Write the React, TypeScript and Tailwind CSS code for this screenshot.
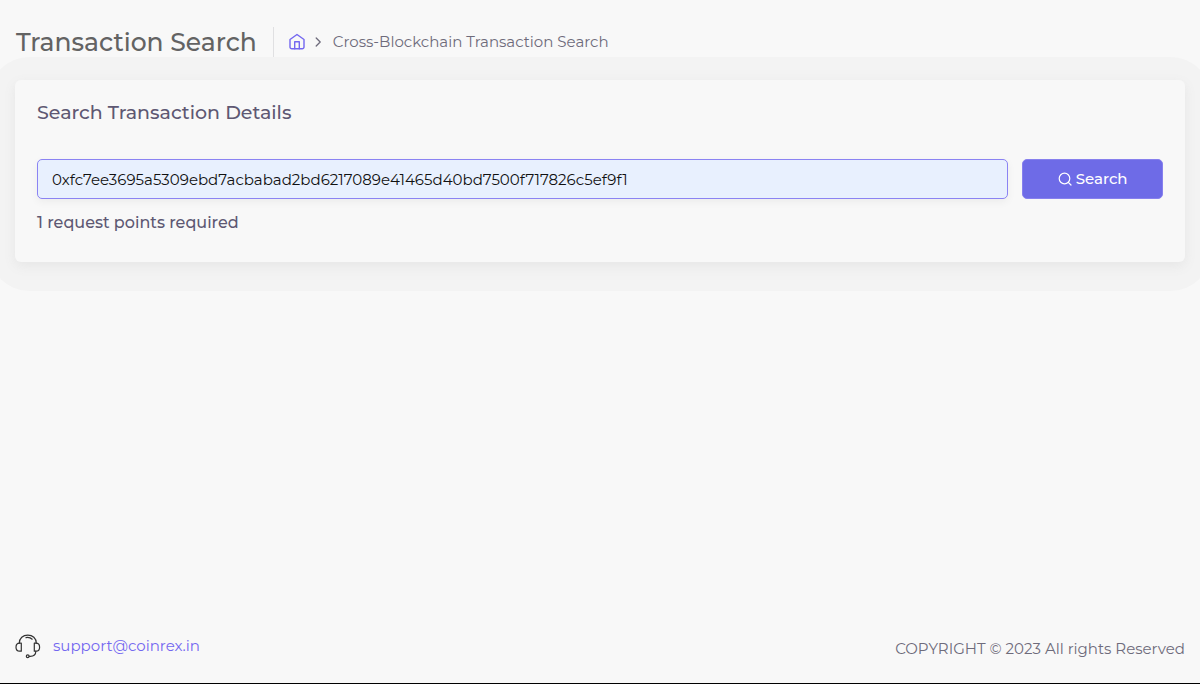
import { useState } from "react";

function HomeIcon() {
  return (
    <svg viewBox="0 0 18 18" className="h-[18px] w-[18px]" fill="none" stroke="currentColor" strokeWidth="1.4" strokeLinejoin="round" strokeLinecap="round" aria-hidden="true">
      <path d="M2 6.500 9 1.500l7 5v7.500a1.800 1.800 0 0 1-1.800 1.800H3.800A1.800 1.800 0 0 1 2 14z" />
      <path d="M6.700 15.800V8.800h4.600v7" />
    </svg>
  );
}

function ChevronIcon() {
  return (
    <svg viewBox="0 0 14 14" className="h-3.5 w-3.5" fill="none" stroke="currentColor" strokeWidth="1.3" strokeLinejoin="round" strokeLinecap="round" aria-hidden="true">
      <path d="m5.200 3 4 4-4 4" />
    </svg>
  );
}

function SearchIcon() {
  return (
    <svg viewBox="0 0 14 14" className="h-3.5 w-3.5" fill="none" stroke="currentColor" strokeWidth="1.2" strokeLinecap="round" aria-hidden="true">
      <circle cx="6.500" cy="6.500" r="5.300" />
      <path d="m10.300 10.300 2.700 2.700" />
    </svg>
  );
}

function HeadsetIcon() {
  return (
    <svg viewBox="0 0 26 26" className="h-[26px] w-[26px]" fill="none" stroke="currentColor" strokeWidth="1.2" strokeLinejoin="round" strokeLinecap="round" aria-hidden="true">
      <path d="M4.300 10.200C4.300 5.300 8 2.100 12.800 2.100s8.500 3.200 8.500 8.100" />
      <path d="M11 4.600c2.600-.4 4.700.2 6.200 1.600" />
      <path d="M6.300 10.200v8H4.600c-2.100 0-3.600-1.600-3.600-4s1.500-4 3.600-4z" />
      <path d="M19.300 10.200v8H21c2.100 0 3.600-1.600 3.600-4s-1.500-4-3.600-4z" />
      <path d="M20.800 18.300c0 3-2.200 5-5.600 5h-1" />
      <circle cx="12.700" cy="23.200" r="1.400" />
    </svg>
  );
}

export default function App() {
  const [hash, setHash] = useState("0xfc7ee3695a5309ebd7acbabad2bd6217089e41465d40bd7500f717826c5ef9f1");

  return (
    <div className="flex min-h-screen flex-col overflow-x-hidden border-b border-black bg-[#f8f8f8] font-['Montserrat','Inter',sans-serif] text-[#6e6b7b]">
      <header className="flex h-20 items-center px-4 pt-1">
        <h1 className="border-r border-[#e0e0e2] pr-4 text-[25px] leading-[30px] font-medium text-[#636363]">Transaction Search</h1>
        <nav aria-label="Breadcrumb" className="pl-3.5">
          <ol className="flex items-center text-[15px] leading-5">
            <li>
              <a href="#home" aria-label="Home" className="block text-[#7367f0]"><HomeIcon /></a>
            </li>
            <li aria-hidden="true" className="mx-1 pl-px"><ChevronIcon /></li>
            <li aria-current="page" className="pl-1">Cross-Blockchain Transaction Search</li>
          </ol>
        </nav>
      </header>

      <main className="flex-1 px-[15px]">
        <div className="rounded-2xl bg-[#f3f3f3] shadow-[0_3px_0_26px_#f3f3f3]">
          <section className="rounded-md bg-[#f8f8f8] px-[22px] pt-[21px] pb-[27px] shadow-[0_4px_12px_#e6e6e6]">
            <h2 className="text-[19px] leading-6 font-medium text-[#5e5873]">Search Transaction Details</h2>
            <form className="mt-[34px] flex gap-3.5" onSubmit={(e) => e.preventDefault()}>
              <input
                type="text"
                aria-label="Transaction hash"
                value={hash}
                onChange={(e) => setHash(e.target.value)}
                className="h-10 min-w-0 flex-1 rounded-[5px] border border-[#8b83f3] bg-[#e8f0fe] px-3.5 text-[15px] text-[#111111] shadow-[0_3px_8px_#0000000d] outline-none"
              />
              <button type="submit" className="flex h-10 w-1/8 items-center justify-center gap-1 rounded-[5px] border border-[#8780ee] bg-[#6e6be7] text-[15px] font-medium text-white">
                <SearchIcon />
                Search
              </button>
            </form>
            <p className="mt-3 text-base leading-6 font-medium text-[#5e5873]">1 request points required</p>
          </section>
        </div>
      </main>

      <footer className="flex items-end justify-between px-[15px] pb-6">
        <a href="mailto:support@coinrex.in" className="flex items-center gap-3 text-[15px] text-[#7367f0]">
          <span className="text-[#333333]"><HeadsetIcon /></span>
          support@coinrex.in
        </a>
        <p className="text-[15px] leading-5">COPYRIGHT © 2023 All rights Reserved</p>
      </footer>
    </div>
  );
}
